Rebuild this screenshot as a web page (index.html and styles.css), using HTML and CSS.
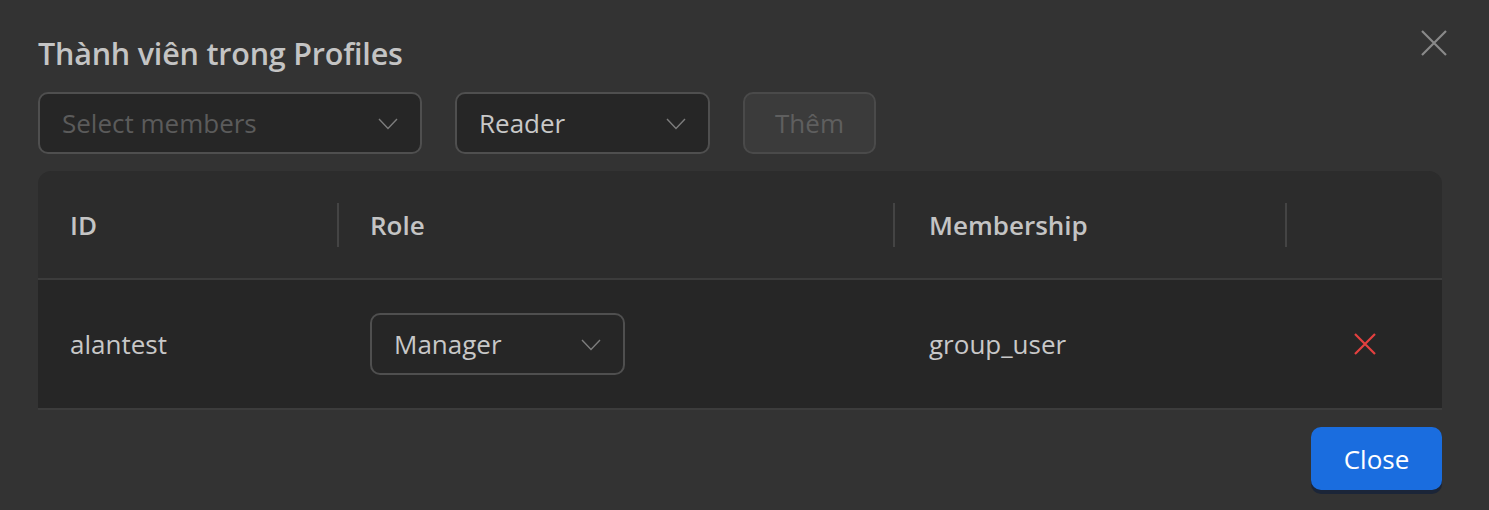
FILE: index.html
```html
<!DOCTYPE html>
<html lang="vi">
<head>
<meta charset="utf-8">
<title>Thành viên trong Profiles</title>
<link rel="stylesheet" href="styles.css">
</head>
<body>
<div class="modal">
  <button class="modal-close" aria-label="Close">
    <svg width="26" height="26" viewBox="0 0 26 26"><path d="M1 1L25 25M25 1L1 25" stroke="#8a8a8a" stroke-width="2.2" fill="none"/></svg>
  </button>
  <h1 class="modal-title">Thành viên trong Profiles</h1>
  <div class="toolbar">
    <div class="select select-members">
      <span class="placeholder">Select members</span>
      <svg class="chev" width="20" height="12" viewBox="0 0 20 12"><path d="M1 1L10 10.5L19 1" stroke="#7d7d7d" stroke-width="1.4" fill="none"/></svg>
    </div>
    <div class="select select-role">
      <span class="value">Reader</span>
      <svg class="chev" width="20" height="12" viewBox="0 0 20 12"><path d="M1 1L10 10.5L19 1" stroke="#7d7d7d" stroke-width="1.4" fill="none"/></svg>
    </div>
    <button class="btn-add" disabled>Thêm</button>
  </div>
  <div class="table">
    <div class="row head">
      <div class="cell c-id">ID</div>
      <div class="cell c-role">Role</div>
      <div class="cell c-mem">Membership</div>
      <div class="cell c-act"></div>
    </div>
    <div class="row body">
      <div class="cell c-id">alantest</div>
      <div class="cell c-role">
        <div class="select select-cell">
          <span class="value">Manager</span>
          <svg class="chev" width="20" height="12" viewBox="0 0 20 12"><path d="M1 1L10 10.5L19 1" stroke="#7d7d7d" stroke-width="1.4" fill="none"/></svg>
        </div>
      </div>
      <div class="cell c-mem">group_user</div>
      <div class="cell c-act">
        <svg width="22" height="22" viewBox="0 0 22 22"><path d="M1 1L21 21M21 1L1 21" stroke="#e5403f" stroke-width="2.2" fill="none"/></svg>
      </div>
    </div>
  </div>
  <div class="footer">
    <button class="btn-primary">Close</button>
  </div>
</div>
</body>
</html>
```

FILE: styles.css
```css
* { box-sizing: border-box; }
html, body {
  margin: 0;
  padding: 0;
  background: #333333;
}
body {
  font-family: "Open Sans", "Noto Sans", sans-serif;
  color: #c8c8c8;
}
.modal {
  position: relative;
  padding: 30px 47px 0 38px;
  height: 510px;
}
.modal-close {
  position: absolute;
  top: 30px;
  right: 42px;
  background: none;
  border: 0;
  padding: 0;
  width: 26px;
  height: 26px;
  display: flex;
}
.modal-title {
  margin: 0;
  font-size: 30.5px;
  font-weight: 600;
  line-height: 46px;
  color: #c4c4c4;
  letter-spacing: -0.2px;
}
.toolbar {
  display: flex;
  gap: 33px;
  margin-top: 16px;
  height: 62px;
}
.select {
  height: 62px;
  border: 2px solid #4f4f4f;
  border-radius: 10px;
  background: #262626;
  display: flex;
  align-items: center;
  justify-content: space-between;
  padding: 0 22px 0 22px;
  font-size: 26px;
}
.select-members { width: 384px; }
.select-role { width: 255px; }
.select-cell { width: 255px; }
.placeholder { color: #5b5b5b; }
.value { color: #c8c8c8; }
.chev { margin-top: 2px; }
.btn-add {
  width: 133px;
  height: 62px;
  border: 2px solid #4a4a4a;
  border-radius: 10px;
  background: #3b3b3b;
  color: #5f5f5f;
  font-family: inherit;
  font-size: 26px;
  padding: 0;
}
.table {
  margin-top: 17px;
  border-radius: 13px 13px 0 0;
  overflow: hidden;
}
.row {
  display: grid;
  grid-template-columns: 300px 556px 392px 156px;
}
.row.head {
  height: 109px;
  background: #2c2c2c;
  border-bottom: 2px solid #3c3c3c;
  font-weight: 600;
  font-size: 26px;
  color: #c4c4c4;
}
.row.body {
  height: 130px;
  background: #262626;
  border-bottom: 2px solid #3c3c3c;
  font-size: 26px;
  color: #c8c8c8;
}
.cell {
  display: flex;
  align-items: center;
  padding: 0 33px 0 32px;
  position: relative;
}
.row.head .cell:not(.c-act)::after {
  content: "";
  position: absolute;
  right: -1px;
  top: 32px;
  height: 44px;
  width: 2px;
  background: #444444;
}
.c-mem { padding-left: 35px; }
.c-act { justify-content: flex-start; padding-left: 68px; }
.footer {
  display: flex;
  justify-content: flex-end;
  padding-top: 17px;
}
.btn-primary {
  width: 131px;
  height: 63px;
  border: 0;
  border-radius: 10px;
  background: #1a6ddf;
  color: #ffffff;
  font-family: inherit;
  font-size: 26px;
  box-shadow: 0 4px 0 #1b2538;
  padding: 0;
}
```
